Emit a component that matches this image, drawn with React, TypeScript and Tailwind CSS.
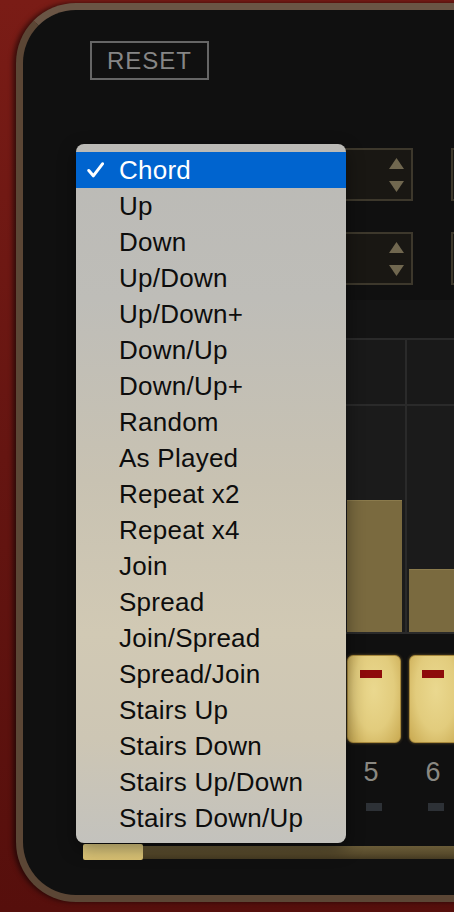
import React from 'react';

const modes = [
  'Chord',
  'Up',
  'Down',
  'Up/Down',
  'Up/Down+',
  'Down/Up',
  'Down/Up+',
  'Random',
  'As Played',
  'Repeat x2',
  'Repeat x4',
  'Join',
  'Spread',
  'Join/Spread',
  'Spread/Join',
  'Stairs Up',
  'Stairs Down',
  'Stairs Up/Down',
  'Stairs Down/Up',
];

// step values for the bar grid (only 5 and 6 show beside the menu)
const steps = [
  { bar: 90, label: '1' },
  { bar: 40, label: '2' },
  { bar: 150, label: '3' },
  { bar: 70, label: '4' },
  { bar: 132, label: '5' },
  { bar: 63, label: '6' },
];

const Spinner: React.FC = () => (
  <div className="shrink-0 w-[180px] h-[53px] border-2 border-[#3d382c] bg-[#191713] flex justify-end items-center pr-[7px]">
    <div className="flex flex-col gap-[12px] items-center">
      <svg width="15" height="11" viewBox="0 0 15 11">
        <path d="M7.5 0 L15 11 L0 11 Z" fill="#70674f" />
      </svg>
      <svg width="15" height="11" viewBox="0 0 15 11">
        <path d="M0 0 L15 0 L7.5 11 Z" fill="#70674f" />
      </svg>
    </div>
  </div>
);

const ModeMenu: React.FC<{ selected: string }> = ({ selected }) => (
  <div
    className="absolute left-[76px] top-[144px] w-[270px] h-[699px] rounded-[8px] pt-[8px] shadow-[0_6px_18px_rgba(0,0,0,0.45)] bg-[linear-gradient(180deg,#bbbab6_0%,#bebdb8_22%,#c8c2b2_48%,#d1c9b4_70%,#cdc6b4_85%,#c3c2bd_100%)]"
    style={{ fontFamily: '"Liberation Sans", Arial, sans-serif' }}
  >
    {modes.map((m) => {
      const active = m === selected;
      return (
        <div
          key={m}
          className={`h-[36px] flex items-center pl-[43px] relative text-[26px] tracking-[0.25px] ${
            active ? 'bg-[#0064cf] text-white' : 'text-[#0d0d0d]'
          }`}
        >
          {active && (
            <svg className="absolute left-[11px] top-[10px]" width="17" height="16" viewBox="0 0 17 16">
              <path
                d="M1.8 8.5 L6.3 13.8 L15.5 1.8"
                fill="none"
                stroke="#ffffff"
                strokeWidth="3"
                strokeLinecap="round"
                strokeLinejoin="round"
              />
            </svg>
          )}
          <span className="leading-none -mt-[1px]">{m}</span>
        </div>
      );
    })}
  </div>
);

export default function App() {
  return (
    <div className="relative w-[454px] h-[912px] overflow-hidden bg-[linear-gradient(180deg,#7a1c16_0%,#651511_50%,#560f0c_100%)]">
      <div className="ml-[16px] mt-[3px] w-[540px] h-[899px] rounded-[60px] border-[7px] border-[#5b4635] border-t-[#6a5545] bg-[#101010] shadow-[-3px_0_5px_rgba(0,0,0,0.55)]">
        <div style={{ fontFamily: '"Liberation Sans", Arial, sans-serif' }}>
          {/* reset */}
          <div className="pt-[31px] pl-[67px]">
            <div className="w-[119px] h-[39px] border-2 border-[#666666] flex items-center justify-center text-[24px] tracking-[1px] text-[#868686] leading-none">
              RESET
            </div>
          </div>

          {/* spinners */}
          <div className="mt-[68px] ml-[210px] flex flex-col gap-[31px]">
            <div className="flex gap-[38px]">
              <Spinner />
              <Spinner />
            </div>
            <div className="flex gap-[38px]">
              <Spinner />
              <Spinner />
            </div>
          </div>

          {/* dark band above grid */}
          <div className="mt-[15px] ml-[72px] h-[38px] bg-[#141414]" />

          {/* step grid */}
          <div className="ml-[72px] flex border-t-2 border-b-2 border-[#2a2a2a] bg-[#1b1b1b]">
            {steps.map((s) => (
              <div key={s.label} className="shrink-0 w-[62px] border-l-2 border-[#2a2a2a] flex flex-col">
                <div className="h-[66px] border-b-2 border-[#2a2a2a] bg-[#191919]" />
                <div className="h-[226px] flex flex-col justify-end pl-[2px] pr-[3px]">
                  <div className="bg-[#7a6a3f] border-t border-[#8a7a4c]" style={{ height: s.bar }} />
                </div>
              </div>
            ))}
          </div>

          {/* pads, numbers, leds */}
          <div className="ml-[72px] mt-[21px] flex">
            {steps.map((s) => (
              <div key={s.label} className="shrink-0 w-[62px] pl-[4px] flex flex-col">
                <div className="w-[54px] h-[88px] rounded-[6px] border border-[#a8893c] bg-[radial-gradient(ellipse_at_50%_40%,#ead88f_0%,#e2cc7d_55%,#c9a950_100%)] shadow-[0_0_3px_rgba(200,160,70,0.5)] flex justify-center pt-[14px]">
                  <div className="w-[22px] h-[8px] bg-[#8e0b0b] -ml-[6px]" />
                </div>
                <div className="w-[54px] h-[44px] flex items-center justify-center text-[27px] text-[#8a8882] leading-none pt-[14px] -ml-[3px]">
                  {s.label}
                </div>
                <div className="w-[54px] flex justify-center mt-[16px]">
                  <div className="w-[16px] h-[8px] bg-[#2d3136]" />
                </div>
              </div>
            ))}
          </div>

          {/* slider */}
          <div className="ml-[60px] mt-[33px] flex items-center">
            <div className="w-[60px] h-[16px] rounded-[2px] bg-[linear-gradient(180deg,#ecd88a_0%,#dcc373_100%)]" />
            <div className="flex-1 h-[13px] bg-[linear-gradient(180deg,#6a5c38_0%,#584b2c_60%,#453a22_100%)]" />
          </div>
        </div>
      </div>

      <ModeMenu selected="Chord" />
    </div>
  );
}
